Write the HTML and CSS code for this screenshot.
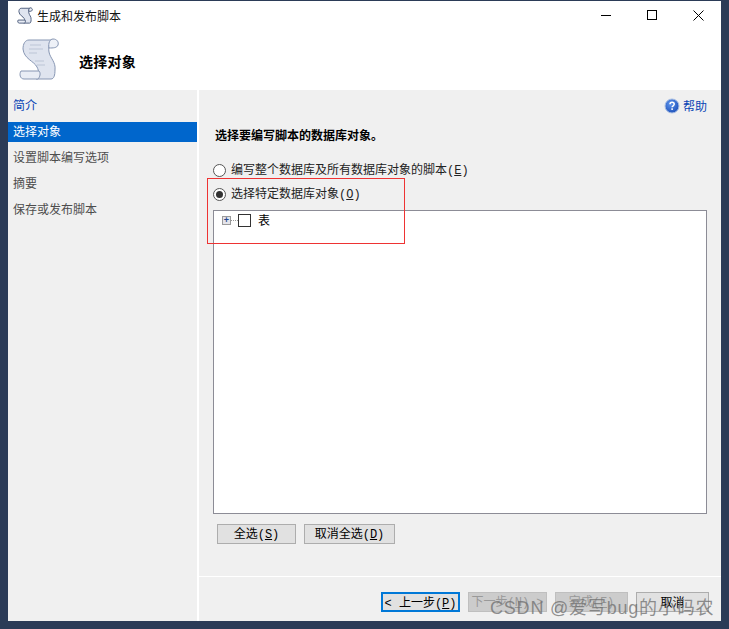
FILE: index.html
```html
<!DOCTYPE html>
<html lang="zh">
<head>
<meta charset="utf-8">
<title>生成和发布脚本</title>
<link rel="stylesheet" href="styles.css">
</head>
<body>
<div class="window">
  <div class="titlebar">
    <svg class="title-icon" width="16" height="17" viewBox="8 3 42 44">
      <path class="scroll-body dark" d="M19 6H43C40 8 38 12 39 18C40 24 46 28 45 36C45 41 44 45 41 45H26C30 42 29 37 27 33C24 27 14 25 13 15C13 10 15 6 19 6z"/>
      <path class="scroll-curl dark" d="M43 5C47 5 49 8 48 11C47 14 43 14 39 14C38 9 40 5 43 5z"/>
      <path class="scroll-roll dark" d="M11 37H29C31 39 30 43 28 45H14C10 45 9 40 11 37z"/>
    </svg>
    <span class="title-text">生成和发布脚本</span>
    <div class="controls">
      <svg width="11" height="11" viewBox="0 0 11 11"><path d="M0 5.500h10" stroke="#000"/></svg>
      <svg width="11" height="11" viewBox="0 0 11 11"><rect x=".5" y=".5" width="9" height="9" fill="none" stroke="#000"/></svg>
      <svg width="11" height="11" viewBox="0 0 11 11"><path d="M.5 .5l10 10M10.500 .5l-10 10" stroke="#000" fill="none"/></svg>
    </div>
  </div>
  <div class="banner">
    <svg class="banner-icon" width="42" height="44" viewBox="8 3 42 44">
      <path class="scroll-body" d="M19 6H43C40 8 38 12 39 18C40 24 46 28 45 36C45 41 44 45 41 45H26C30 42 29 37 27 33C24 27 14 25 13 15C13 10 15 6 19 6z"/>
      <path class="scroll-curl" d="M43 5C47 5 49 8 48 11C47 14 43 14 39 14C38 9 40 5 43 5z"/>
      <path class="scroll-roll" d="M11 37H29C31 39 30 43 28 45H14C10 45 9 40 11 37z"/>
      <path class="scroll-lines" d="M20 11h11M19 15h14M19 19h8M25 27h9M27 31h8"/>
    </svg>
    <span class="banner-title">选择对象</span>
  </div>
  <div class="content">
    <nav class="sidebar">
      <div class="nav-item link">简介</div>
      <div class="nav-item active">选择对象</div>
      <div class="nav-item">设置脚本编写选项</div>
      <div class="nav-item">摘要</div>
      <div class="nav-item">保存或发布脚本</div>
    </nav>
    <main class="main">
      <div class="help">
        <svg width="16" height="16" viewBox="0 0 16 16"><defs><radialGradient id="helpBlue" cx=".4" cy=".35" r=".7"><stop offset="0" stop-color="#5f95ec"/><stop offset="1" stop-color="#1c4fb8"/></radialGradient></defs><circle cx="8" cy="8" r="7" fill="url(#helpBlue)" stroke="#a9bfe4"/><path d="M6 6.300c0-2.600 4.200-2.600 4.200 0 0 1.500-2.100 1.500-2.100 3" fill="none" stroke="#fff" stroke-width="1.500"/><path d="M8.100 10.300v1.700" stroke="#fff" stroke-width="1.500"/></svg>
        <span>帮助</span>
      </div>
      <h1 class="heading">选择要编写脚本的数据库对象。</h1>
      <label class="radio-row first"><span class="radio"></span><span>编写整个数据库及所有数据库对象的脚本<span class="key">(<u>E</u>)</span></span></label>
      <label class="radio-row"><span class="radio on"></span><span>选择特定数据库对象<span class="key">(<u>O</u>)</span></span></label>
      <div class="tree">
        <div class="tree-row">
          <span class="expander">+</span><span class="dots"></span><span class="check"></span><span class="tree-label">表</span>
        </div>
      </div>
      <div class="select-buttons">
        <button class="btn wide">全选<span class="key">(<u>S</u>)</span></button>
        <button class="btn wider">取消全选<span class="key">(<u>D</u>)</span></button>
      </div>
      <div class="footer">
        <button class="btn nav wide-nav focus"><span class="key">&lt; </span>上一步<span class="key">(<u>P</u>)</span></button>
        <button class="btn nav wide-nav disabled">下一步<span class="key">(<u>N</u>) &gt;</span></button>
        <button class="btn nav disabled">完成<span class="key">(<u>F</u>)</span></button>
        <button class="btn nav">取消</button>
      </div>
    </main>
  </div>
</div>
<div class="red-box"></div>
<div class="watermark">CSDN @爱写bug的小码农</div>
</body>
</html>
```
FILE: styles.css
```css
* { box-sizing: border-box; }
html, body { height: 100%; }
body {
  margin: 0;
  padding: 1px 8px 8px;
  background: #2b3b57;
  font: 12px/16px "Noto Sans CJK SC", "Liberation Sans", sans-serif;
  color: #000;
  overflow: hidden;
  position: relative;
}
.key { font-family: "Liberation Mono", monospace; white-space: pre; }
.window {
  height: 620px;
  background: #fff;
  display: flex;
  flex-direction: column;
}
.titlebar {
  height: 29px;
  display: flex;
  align-items: center;
  padding-left: 9px;
  flex: none;
}
.title-icon { margin-right: 4px; }
.title-text { color: #111; }
.controls {
  margin-left: auto;
  display: flex;
  gap: 35px;
  padding-right: 17px;
  padding-bottom: 1px;
}
.banner {
  height: 60px;
  flex: none;
  display: flex;
  align-items: center;
  padding-left: 10px;
}
.banner-icon { margin-right: 19px; margin-top: -2px; }
.scroll-body { fill: #dfe4ef; stroke: #8796b3; }
.scroll-curl { fill: #eef1f7; stroke: #8796b3; }
.scroll-roll { fill: #e9edf5; stroke: #8796b3; }
.scroll-lines { fill: none; stroke: #bcc5d6; }
.dark { stroke: #4d5d7c; stroke-width: 2.500; }
.banner-title { font-size: 14px; font-weight: bold; letter-spacing: .25px; margin-top: 1px; }
.content { flex: 1; display: flex; gap: 2px; min-height: 0; }
.sidebar {
  width: 189px;
  background: #f0f0f0;
  padding-top: 5px;
  flex: none;
}
.nav-item {
  height: 20px;
  margin-bottom: 6px;
  padding-left: 5px;
  line-height: 18px;
  color: #4d4d4d;
}
.nav-item.link { color: #0a45b5; margin-bottom: 7px; line-height: 20px; }
.nav-item.active { background: #0066cc; color: #fff; }
.main {
  flex: 1;
  background: #f0f0f0;
  display: flex;
  flex-direction: column;
  min-width: 0;
}
.help {
  display: flex;
  justify-content: flex-end;
  align-items: center;
  gap: 3px;
  color: #0a45b5;
  padding: 7px 14px 0 0;
  height: 24px;
}
.heading {
  font-size: 12px;
  font-weight: bold;
  line-height: 16px;
  margin: 13px 0 0 16px;
}
.radio-row {
  display: flex;
  align-items: center;
  margin: 8px 0 0 14px;
  height: 16px;
  color: #222;
}
.radio-row.first { margin-top: 19px; }
.radio {
  width: 13px;
  height: 13px;
  border: 1px solid #555;
  border-radius: 50%;
  background: #fff;
  margin-right: 5px;
  position: relative;
}
.radio.on::after {
  content: "";
  position: absolute;
  inset: 2px;
  border-radius: 50%;
  background: #333;
}
.tree {
  width: 494px;
  height: 304px;
  margin: 8px 0 0 14px;
  background: #fff;
  border: 1px solid #8c8c96;
  padding: 2px 0 0 8px;
}
.tree-row { display: flex; align-items: center; height: 15px; }
.expander {
  width: 9px;
  height: 9px;
  border: 1px solid #9a9a9a;
  background: #e4e4ea;
  color: #24478f;
  font: bold 9px/7px "Liberation Sans", sans-serif;
  text-align: center;
}
.dots { width: 7px; border-top: 1px dotted #999; }
.check {
  width: 13px;
  height: 13px;
  border: 1px solid #333;
  background: #fff;
}
.tree-label { margin: 0 0 2px 7px; }
.select-buttons {
  display: flex;
  gap: 8px;
  margin: 10px 0 0 18px;
}
.btn {
  font: 12px/16px "Noto Sans CJK SC", "Liberation Sans", sans-serif;
  height: 20px;
  padding: 0;
  background: #e1e1e1;
  border: 1px solid #adadad;
  color: #000;
}
.wide { width: 79px; }
.wider { width: 91px; }
.footer {
  margin-top: 32px;
  height: 45px;
  border-top: 1px solid #fff;
  flex: none;
  display: flex;
  padding: 15px 12px 0 182px;
  justify-content: space-between;
}
.nav { width: 73px; }
.wide-nav { width: 79px; }
.focus { border: 2px solid #0078d7; }
.disabled { color: #999; background: #ccc; border-color: #bfbfbf; }
.red-box {
  position: absolute;
  left: 207px;
  top: 178px;
  width: 198px;
  height: 66px;
  border: 1px solid #ee3333;
}
.watermark {
  position: absolute;
  left: 490px;
  top: 596px;
  font: 18px/24px "Liberation Sans", "Noto Sans CJK SC", sans-serif;
  letter-spacing: .8px;
  color: rgba(110, 110, 110, .75);
  white-space: nowrap;
}
```
